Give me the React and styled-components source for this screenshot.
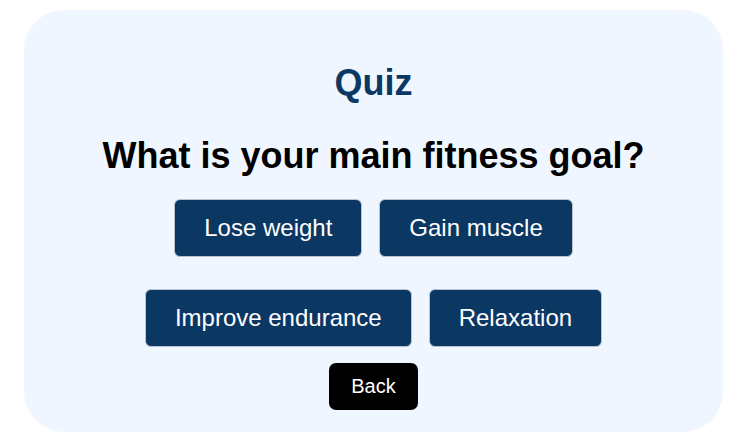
import styled, { createGlobalStyle } from "styled-components"

const GlobalStyle = createGlobalStyle`
  html, body {
    margin: 0;
    padding: 0;
    background: #ffffff;
  }
  body {
    font-family: "Liberation Sans", Arial, sans-serif;
  }
`

const Page = styled.div`
  padding: 10px 0 0 24px;
`

const Card = styled.div`
  width: 699px;
  height: 422px;
  box-sizing: border-box;
  padding: 52px 20px 22px;
  background-color: #eff6ff;
  border-radius: 40px;
  display: flex;
  flex-direction: column;
  align-items: center;
`

const Title = styled.h1`
  margin: 0;
  font-size: 36px;
  line-height: 41px;
  font-weight: bold;
  color: #0c3864;
`

const Question = styled.h2`
  margin: 32px 0 0;
  font-size: 36px;
  line-height: 41px;
  font-weight: bold;
  color: #000000;
`

const Options = styled.div`
  margin-top: 23px;
  display: flex;
  flex-direction: column;
  align-items: center;
  gap: 32px;
`

const Row = styled.div`
  display: flex;
  gap: 17px;
`

const Option = styled.button`
  font-family: "Liberation Sans", Arial, sans-serif;
  font-size: 24px;
  line-height: 28px;
  padding: 14px 29px;
  border: 1px solid #b9c3cf;
  border-radius: 6px;
  background-color: #0b3763;
  color: #ffffff;
  cursor: pointer;
`

const BackButton = styled.button`
  margin-top: 16px;
  font-family: "Liberation Sans", Arial, sans-serif;
  font-size: 20px;
  line-height: 23px;
  padding: 12px 22px;
  border: none;
  border-radius: 7px;
  background-color: #000000;
  color: #ffffff;
  cursor: pointer;
`

const rows = [
  ["Lose weight", "Gain muscle"],
  ["Improve endurance", "Relaxation"],
]

export default function App() {
  return (
    <>
      <GlobalStyle />
      <Page>
        <Card>
          <Title>Quiz</Title>
          <Question>What is your main fitness goal?</Question>
          <Options>
            {rows.map((row) => (
              <Row key={row[0]}>
                {row.map((label) => (
                  <Option key={label}>{label}</Option>
                ))}
              </Row>
            ))}
          </Options>
          <BackButton>Back</BackButton>
        </Card>
      </Page>
    </>
  )
}
